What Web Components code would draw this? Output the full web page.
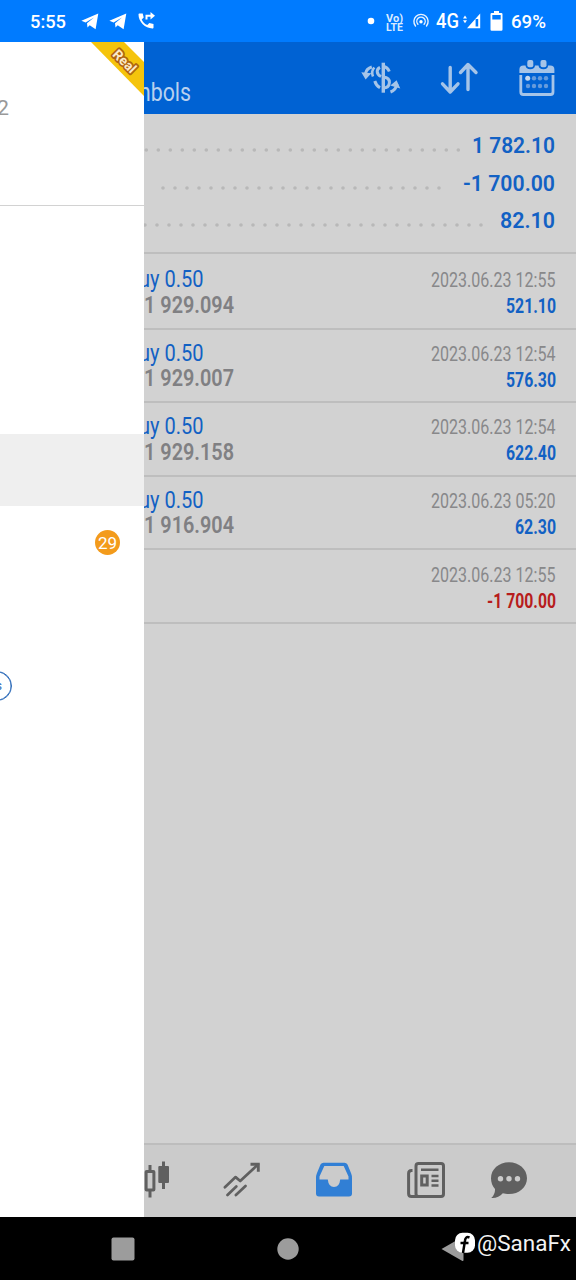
<!DOCTYPE html>
<html lang="en">
<head>
<meta charset="utf-8">
<title>History</title>
<style>
  body {
    margin:0;
    width:576px;
    height:1280px;
    overflow:hidden;
    background:#000;
    font-family:Roboto, "Liberation Sans", sans-serif;
  }
</style>
</head>
<body>
<phone-screen></phone-screen>

<script>
// icons are drawn at their real size: [width, height, markup]
const ICONS = {
  plane: [18, 17, `<path fill="#fff" d="M.4 7.700 17.300.6 14.600 16.200 8.700 12.200 6.500 14.500 6 10.300 13 4.600 4.600 9.600z"/>`],
  call: [18, 18, `<path fill="#fff" d="M1.400 1.500h3.300l1 4.100-2 1.800c1.400 2.800 3 4.400 5.700 5.700l1.900-2 4.200 1v3.300c0 .7-.4 1.100-1.100 1.100C7.200 16.500.5 9.800.5 2.600c0-.7.3-1.100.9-1.100z"/><path fill="none" stroke="#fff" stroke-width="2" d="M8.500 7.500V3.800H14"/><path fill="#fff" d="M12.500 0 17 3.800 12.500 7.600z"/>`],
  dot: [8, 8, `<circle cx="4" cy="4" r="3.300" fill="#fff"/>`],
  hotspot: [18, 18, `<g fill="none" stroke="#e8f2ff" stroke-width="1.400" stroke-linecap="round"><path d="M3.500 14A7.100 7.100 0 1 1 14.500 14"/><path d="M5.900 12.200A4.200 4.200 0 1 1 12.100 12.200"/></g><circle cx="9" cy="9.800" r="1.700" fill="#fff"/>`],
  signal: [18, 16, `<path fill="#fff" fill-rule="evenodd" d="M17.200.4V15.300H4zM15.200 6V13.600H12.600V6z"/><path fill="#fff" d="M2 2.500 4 5.600H0zM2 10.200 0 7.200H4z"/>`],
  battery: [13, 20, `<path fill="#fff" fill-rule="evenodd" d="M4 0h5v2h2.300q1.200 0 1.200 1.200v15.300q0 1.200-1.200 1.200H1.700Q.5 19.700.5 18.500V3.200Q.5 2 1.700 2H4zM2.300 4v4.500h8.400V4z"/>`],
  currency: [40, 37, `<g fill="none" stroke="currentColor" stroke-width="3"><path d="M22.300 3.700V33.700" stroke-width="3.400"/><path d="M22.300 7.500Q26.500 8 28.300 12.500M22.300 18C27 18.500 28.600 20.800 28.400 23.500 28.200 27 26 29 22.300 29"/><path d="M19 8.300C15.300 10 15 15 20 17.500M13.800 22Q15 26.500 19 28.700"/><path d="M13.300 8.500Q9.800 12.500 12 17.500" stroke-width="2.600"/><path d="M4.500 14.500Q5.500 9.500 10.800 8M36 25Q35 31 29.500 33"/></g><path fill="currentColor" d="M.3 13.200 10.400 14.300 4.600 20.400zM29.300 26.500 35.600 21.300 39.300 29.500z"/>`],
  sort: [40, 36, `<g fill="none" stroke="currentColor" stroke-width="3.400" stroke-linecap="round" stroke-linejoin="round"><path d="M11.200 7.500V31M3.500 23.800 11.200 32 19 23.800M29 29.500V5M21.500 12.500 29 4.500 37 12.500"/></g>`],
  calendar: [38, 38, `<path fill="none" stroke="currentColor" stroke-width="2.800" d="M2.800 16V33q0 2.500 2.500 2.500H32.500q2.500 0 2.500-2.500V16"/><path fill="currentColor" d="M1.400 10.500Q1.400 6.500 5.500 6.500H7.500Q8 10.300 12.300 10.300T17 6.500H20.500Q21 10.300 25.500 10.300T30 6.500H32.300Q36.400 6.500 36.400 10.500V14H1.400z"/><rect x="9.300" y="1" width="6" height="7.300" rx="2" fill="currentColor"/><rect x="22.500" y="1" width="6" height="7.300" rx="2" fill="currentColor"/><circle cx="9.700" cy="19.300" r="2.500" fill="#c7d8ec"/><g fill="#659bdc"><circle cx="16" cy="19.300" r="2.200"/><circle cx="22" cy="19.300" r="2.200"/><circle cx="28" cy="19.300" r="2.200"/><circle cx="10" cy="27" r="2.200"/><circle cx="16" cy="27" r="2.200"/><circle cx="22" cy="27" r="2.200"/><circle cx="28" cy="27" r="2.200"/></g>`],
  candles: [26, 38, `<path stroke="currentColor" stroke-width="3" d="M6 4V10M6 28.500V36.500"/><rect x="2.100" y="10.500" width="7.800" height="18.500" rx=".5" fill="none" stroke="currentColor" stroke-width="3"/><path stroke="currentColor" stroke-width="3" d="M19.500.5V28"/><rect x="14.300" y="5" width="10.700" height="17" rx="1" fill="currentColor"/>`],
  trend: [38, 38, `<path fill="none" stroke="currentColor" stroke-width="2.700" stroke-linecap="round" stroke-linejoin="round" d="M1.900 26.300 12.600 16.100 17.200 20 35 3.500M4.500 34 13.300 25.500M12.900 34 22.500 25"/><path fill="none" stroke="currentColor" stroke-width="2.900" d="M27.500 3.200H35.300V10.800"/>`],
  inbox: [38, 38, `<path fill="#317fd5" fill-rule="evenodd" d="M8.500 1.700H29.500Q31.500 1.700 32.500 3.600L36.200 12.500Q37 14.500 37 17V32.500Q37 35.500 34 35.500H4Q1 35.500 1 32.500V17Q1 14.500 1.800 12.500L5.500 3.600Q6.500 1.700 8.500 1.700zM9.300 5 4.500 15.500V18.500H12.800Q13.500 26 19 26T25.200 18.500H33.500V15.500L28.700 5z"/>`],
  news: [40, 38, `<g fill="none" stroke="currentColor" stroke-width="3"><rect x="10" y="2.500" width="27.500" height="33" rx="2.500"/><path d="M6.500 9.500H5.500Q2.600 9.500 2.600 12.500V32.500Q2.600 35.500 5.500 35.500H12"/></g><g fill="none" stroke="currentColor" stroke-width="2.500"><path d="M15 8.800H32.500M25.500 15H32.500M25.500 19.700H32.500M25.500 24.400H32.500"/><rect x="15.700" y="15" width="5.500" height="9" stroke-width="3"/></g>`],
  chat: [38, 38, `<path fill="currentColor" d="M19 1.200C29 1.200 37 8 37 17.200S29 33 19 33C16.500 33 14.500 32.700 12.800 32.200 10 35.500 5.500 37.500 1.300 37 4 34.500 5.200 31 5 28 2.500 25 1 21.500 1 17.200 1 8 9 1.200 19 1.200z"/><g fill="#cbcbcb"><circle cx="10.500" cy="17.700" r="2.700"/><circle cx="19" cy="17.700" r="2.700"/><circle cx="27.500" cy="17.700" r="2.700"/></g>`],
  square: [24, 24, `<rect x=".5" y=".5" width="23" height="23" rx="2" fill="#9c9c9c"/>`],
  circle: [24, 24, `<circle cx="12" cy="12" r="10.700" fill="#9c9c9c"/>`],
  back: [24, 26, `<path fill="#9c9c9c" d="M.5 13 21 1.200Q22.500.5 22.500 2V24Q22.500 25.500 21 24.800z"/>`],
  facebook: [22, 22, `<rect x="1" y=".8" width="20" height="20" rx="7.500" fill="#fff"/><path fill="none" stroke="#000" stroke-width="2.500" d="M15.500 5.500C12.500 4.300 11.300 6 11 8.500L9 21M6.500 11H14.500"/>`]
};

class UiIcon extends HTMLElement {
  constructor() {
    super();
    this.attachShadow({ mode: 'open' });
  }

  connectedCallback() {
    const [w, h, body] = ICONS[this.getAttribute('name')];
    this.shadowRoot.innerHTML = `
      <style>
        :host {display:block; flex:none;}
        svg {display:block;}
      </style>
      <svg width="${w}" height="${h}" viewBox="0 0 ${w} ${h}">${body}</svg>
    `;
  }
}

// one line of text squeezed to a given width, 26px high with the baseline at 20
class FitText extends HTMLElement {
  constructor() {
    super();
    this.attachShadow({ mode: 'open' });
  }

  connectedCallback() {
    const w = this.getAttribute('w');
    this.shadowRoot.innerHTML = `
      <style>
        :host {display:block; flex:none;}
        svg {display:block; overflow:visible;}
        text {fill:currentColor; font-family:inherit;}
      </style>
      <svg width="${w}" height="26">
        <text y="20" font-size="${this.getAttribute('size')}" font-weight="${this.getAttribute('weight') || 400}"
          textLength="${w}" lengthAdjust="spacingAndGlyphs">${this.textContent}</text>
      </svg>
    `;
  }
}

class StatusBar extends HTMLElement {
  constructor() {
    super();
    this.attachShadow({ mode: 'open' });
    this.shadowRoot.innerHTML = `
      <style>
        :host {
          display:flex;
          align-items:center;
          box-sizing:border-box;
          height:42px;
          background:#007bff;
          color:#fff;
        }
        .volte {
          width:18px;
          height:26px;
          color:#d9eaff;
        }
        .volte fit-text {height:9px; margin-top:-6px;}
        .volte fit-text + fit-text {margin-top:0;}
      </style>
      <fit-text w="36" size="19" weight="500" style="margin-left:30px">5:55</fit-text>
      <ui-icon name="plane" style="margin-left:15px"></ui-icon>
      <ui-icon name="plane" style="margin-left:10px"></ui-icon>
      <ui-icon name="call" style="margin-left:11px"></ui-icon>
      <ui-icon name="dot" style="margin-left:211px"></ui-icon>
      <div class="volte" style="margin-left:11px">
        <fit-text w="17" size="10.500" weight="700">Vo)</fit-text>
        <fit-text w="17" size="10.500" weight="700">LTE</fit-text>
      </div>
      <ui-icon name="hotspot" style="margin-left:8px"></ui-icon>
      <fit-text w="23" size="19.500" weight="500" style="margin-left:6px">4G</fit-text>
      <ui-icon name="signal" style="margin-left:4px"></ui-icon>
      <ui-icon name="battery" style="margin-left:9px"></ui-icon>
      <fit-text w="35" size="18.500" weight="500" style="margin-left:8px">69%</fit-text>
    `;
  }
}

class SideDrawer extends HTMLElement {
  constructor() {
    super();
    this.attachShadow({ mode: 'open' });
    this.shadowRoot.innerHTML = `
      <style>
        :host {
          display:block;
          position:relative;
          background:#fff;
          overflow:hidden;
        }
        .ribbon {position:absolute; top:0; right:0;}
        header {
          box-sizing:border-box;
          height:164px;
          padding-top:53px;
          border-bottom:1px solid #d2d2d2;
          color:#999;
        }
        header fit-text {margin-left:-3px;}
        .active {
          margin-top:228px;
          height:72px;
          background:#efefef;
        }
        .item {
          display:flex;
          justify-content:flex-end;
          align-items:center;
          height:73px;
          padding-right:24px;
        }
        .badge {
          width:25px;
          height:25px;
          border-radius:50%;
          background:#f39b1b;
          color:#fff;
          font-size:17px;
          line-height:26px;
          text-align:center;
        }
        .pill {
          box-sizing:border-box;
          width:80px;
          height:30px;
          margin:92px 0 0 -68px;
          padding-right:9px;
          border:1.500px solid #2968b8;
          border-radius:15px;
          box-shadow:inset 0 0 0 .5px #2968b8;
          color:#2968b8;
          font-size:12px;
          line-height:29px;
          text-align:right;
        }
      </style>
      <svg class="ribbon" width="54" height="56">
        <path fill="#f5c40c" d="M1 0H34L54 20V54z"/>
        <text transform="translate(34.500 19.500) rotate(45)" y="4.500" text-anchor="middle" font-size="13.500" font-weight="700"
          fill="#fbe9c8" stroke="#b06412" stroke-width="3.500" stroke-linejoin="round" paint-order="stroke">Real</text>
      </svg>
      <header><fit-text w="12" size="21">2</fit-text></header>
      <div class="active"></div>
      <div class="item"><div class="badge">29</div></div>
      <div class="pill">s</div>
    `;
  }
}

class TopBar extends HTMLElement {
  constructor() {
    super();
    this.attachShadow({ mode: 'open' });
    this.shadowRoot.innerHTML = `
      <style>
        :host {
          display:flex;
          box-sizing:border-box;
          height:72px;
          background:#0062d3;
          color:#a5c4e8;
        }
        fit-text {margin:39px 170px 0 -12px; color:#b8d0ee;}
      </style>
      <fit-text w="59" size="25">mbols</fit-text>
      <ui-icon name="currency" style="margin-top:17px"></ui-icon>
      <ui-icon name="sort" style="margin:18px 0 0 38px"></ui-icon>
      <ui-icon name="calendar" style="margin:17px 0 0 39px"></ui-icon>
    `;
  }
}

class SummaryLine extends HTMLElement {
  constructor() {
    super();
    this.attachShadow({ mode: 'open' });
  }

  connectedCallback() {
    const from = +this.getAttribute('from');
    const to = +this.getAttribute('to');
    this.shadowRoot.innerHTML = `
      <style>
        :host {
          display:flex;
          justify-content:space-between;
          height:37.600px;
          padding-right:21px;
          color:#1261c4;
        }
        svg {flex:none; overflow:visible;}
        fit-text {margin-top:6px;}
      </style>
      <svg width="${to}" height="37">
        <path d="M${from} 23H${to + 1}" stroke="#b8b8b8" stroke-width="3.600" stroke-linecap="round" stroke-dasharray="0 12"/>
      </svg>
      <fit-text w="${this.getAttribute('w')}" size="21.500" weight="600">${this.textContent}</fit-text>
    `;
  }
}

class DealRow extends HTMLElement {
  constructor() {
    super();
    this.attachShadow({ mode: 'open' });
  }

  connectedCallback() {
    const price = this.getAttribute('price');
    const profit = this.getAttribute('profit');
    this.shadowRoot.innerHTML = `
      <style>
        :host {
          display:flex;
          justify-content:space-between;
          box-sizing:border-box;
          height:73.600px;
          padding:11.200px 20.500px 0 0;
          border-bottom:2px solid #bebebe;
        }
        .left {color:#808083;}
        .volume {height:25.500px; margin-left:-5px; color:#1261c4;}
        .right {
          display:flex;
          flex-direction:column;
          align-items:flex-end;
          color:#88888a;
        }
        .profit {color:#1261c4;}
        .loss {color:#b71c1c;}
      </style>
      <div class="left">
        ${price ? `<fit-text class="volume" w="64.500" size="23.500">uy 0.50</fit-text>
        <fit-text w="90" size="23.500" weight="600">${price}</fit-text>` : ''}
      </div>
      <div class="right">
        <fit-text w="124.500" size="19.500">${this.getAttribute('date')}</fit-text>
        <fit-text class="${profit[0] == '-' ? 'loss' : 'profit'}" w="${this.getAttribute('w')}" size="19.500" weight="700">${profit}</fit-text>
      </div>
    `;
  }
}

class TabBar extends HTMLElement {
  constructor() {
    super();
    this.attachShadow({ mode: 'open' });
    this.shadowRoot.innerHTML = `
      <style>
        :host {
          display:flex;
          box-sizing:border-box;
          height:74px;
          padding-top:15.500px;
          border-top:2px solid #bdbdbd;
          background:#cbcbcb;
          color:#606060;
        }
      </style>
      <ui-icon name="candles"></ui-icon>
      <ui-icon name="trend" style="margin-left:53px"></ui-icon>
      <ui-icon name="inbox" style="margin-left:54px"></ui-icon>
      <ui-icon name="news" style="margin-left:53px"></ui-icon>
      <ui-icon name="chat" style="margin-left:44px"></ui-icon>
    `;
  }
}

class SystemNav extends HTMLElement {
  constructor() {
    super();
    this.attachShadow({ mode: 'open' });
    this.shadowRoot.innerHTML = `
      <style>
        :host {
          display:flex;
          align-items:center;
          position:relative;
          height:63px;
          background:#000;
        }
        .mark {
          position:absolute;
          left:454px;
          top:15px;
          display:flex;
          color:#f4f4f4;
        }
      </style>
      <ui-icon name="square" style="margin-left:110.500px"></ui-icon>
      <ui-icon name="circle" style="margin-left:141.500px"></ui-icon>
      <ui-icon name="back" style="margin-left:141px"></ui-icon>
      <div class="mark">
        <ui-icon name="facebook"></ui-icon>
        <fit-text w="94" size="21.500" style="margin:-1.500px 0 0 .5px">@SanaFx</fit-text>
      </div>
    `;
  }
}

class PhoneScreen extends HTMLElement {
  constructor() {
    super();
    this.attachShadow({ mode: 'open' });
    this.shadowRoot.innerHTML = `
      <style>
        :host {display:block;}
        .app {
          display:grid;
          grid-template-columns:144px 432px;
          height:1175px;
        }
        main {
          display:flex;
          flex-direction:column;
          overflow:hidden;
          background:#d2d2d2;
        }
        .summary {
          box-sizing:border-box;
          height:142px;
          padding-top:13px;
        }
        .summary hr {
          height:2px;
          margin:12.200px 0 0;
          border:0;
          background:#bebebe;
        }
        .deals {flex:1;}
      </style>
      <status-bar></status-bar>
      <div class="app">
        <side-drawer></side-drawer>
        <main>
          <top-bar></top-bar>
          <div class="summary">
            <summary-line from="2.300" to="314.300" w="83">1 782.10</summary-line>
            <summary-line from="19" to="295" w="92">-1 700.00</summary-line>
            <summary-line from="1" to="337" w="55">82.10</summary-line>
            <hr>
          </div>
          <div class="deals">
            <deal-row price="1 929.094" date="2023.06.23 12:55" profit="521.10" w="50"></deal-row>
            <deal-row price="1 929.007" date="2023.06.23 12:54" profit="576.30" w="50"></deal-row>
            <deal-row price="1 929.158" date="2023.06.23 12:54" profit="622.40" w="50"></deal-row>
            <deal-row price="1 916.904" date="2023.06.23 05:20" profit="62.30" w="41"></deal-row>
            <deal-row date="2023.06.23 12:55" profit="-1 700.00" w="69"></deal-row>
          </div>
          <tab-bar></tab-bar>
        </main>
      </div>
      <system-nav></system-nav>
    `;
  }
}

customElements.define('ui-icon', UiIcon);
customElements.define('fit-text', FitText);
customElements.define('status-bar', StatusBar);
customElements.define('side-drawer', SideDrawer);
customElements.define('top-bar', TopBar);
customElements.define('summary-line', SummaryLine);
customElements.define('deal-row', DealRow);
customElements.define('tab-bar', TabBar);
customElements.define('system-nav', SystemNav);
customElements.define('phone-screen', PhoneScreen);
</script>
</body>
</html>
